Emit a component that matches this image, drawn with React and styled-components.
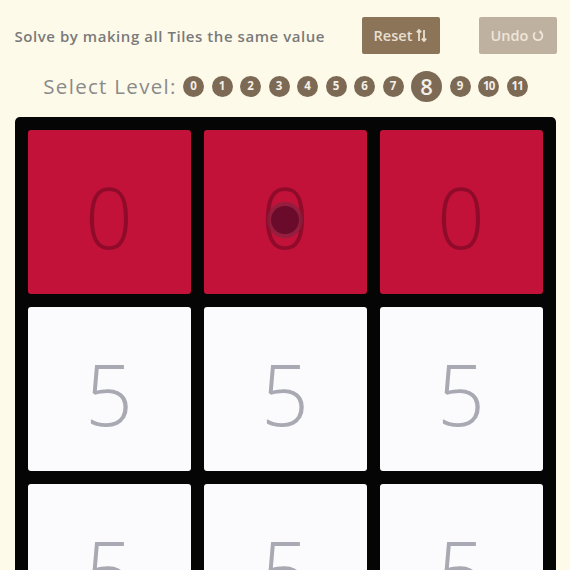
import React from "react";
import styled, { createGlobalStyle } from "styled-components";

const Global = createGlobalStyle`
  html, body { margin: 0; padding: 0; background: #fdfaea; }
  body { font-family: "Open Sans", "Noto Sans", sans-serif; }
`;

const Page = styled.div`
  width: 542px;
  margin: 0 auto;
  padding-top: 17px;
  padding-left: 1px;
`;

const Header = styled.div`
  display: flex;
  align-items: center;
  height: 37px;
`;

const Title = styled.div`
  flex: 1;
  font-size: 15px;
  font-weight: 600;
  color: #7a7a7a;
  letter-spacing: 0.55px;
`;

const Button = styled.button`
  height: 37px;
  width: 78px;
  border: none;
  border-radius: 2px;
  padding: 0;
  display: flex;
  align-items: center;
  justify-content: center;
  gap: 4px;
  font-family: "Open Sans", sans-serif;
  font-size: 14.5px;
  font-weight: 600;
  color: ${(p) => (p.$disabled ? "#eee6da" : "#e9dfcf")};
  background: ${(p) => (p.$disabled ? "#bfb19f" : "#8b7457")};
  margin-left: ${(p) => p.$gap || 0}px;
`;

const LevelRow = styled.div`
  display: flex;
  align-items: center;
  justify-content: center;
  gap: 7.5px;
  height: 32px;
  margin-top: 16px;
  margin-bottom: 15px;
`;

const LevelLabel = styled.span`
  font-size: 20.5px;
  color: #8a8a8a;
  letter-spacing: 1.3px;
  margin-right: -1px;
`;

const LevelDot = styled.span`
  width: ${(p) => (p.$active ? 31 : 21)}px;
  height: ${(p) => (p.$active ? 31 : 21)}px;
  border-radius: 50%;
  background: #7d6a55;
  color: #f4efe8;
  font-size: ${(p) => (p.$active ? 22 : 11.5)}px;
  font-weight: ${(p) => (p.$active ? 600 : 700)};
  display: flex;
  align-items: center;
  justify-content: center;
  letter-spacing: ${(p) => (p.$small ? "-0.8px" : "0")};
  line-height: 1;
`;

const Board = styled.div`
  background: #050505;
  border-radius: 5px;
  padding: 13px;
  display: grid;
  grid-template-columns: repeat(3, 163px);
  grid-auto-rows: 164px;
  gap: 13px;
  width: 515px;
`;

const Tile = styled.div`
  position: relative;
  border-radius: 3px;
  background: ${(p) => (p.$red ? "#c2123a" : "#fbfbfd")};
  color: ${(p) => (p.$red ? "rgba(70,0,20,0.4)" : "#a9a9b3")};
  display: flex;
  align-items: center;
  justify-content: center;
  font-size: 84px;
  font-weight: 340;
  line-height: 1;
  padding-top: 10px;
  box-sizing: border-box;
`;

const Marker = styled.span`
  position: absolute;
  left: 50%;
  top: calc(50% + 8px);
  width: 28px;
  height: 28px;
  border-radius: 50%;
  transform: translate(-50%, -50%);
  background: #6a0b2b;
  box-shadow: 0 0 0 4px rgba(130, 35, 65, 0.7);
`;

const SortIcon = () => (
  <svg width="11" height="13" viewBox="0 0 11 13" fill="none" stroke="currentColor" strokeWidth="1.8">
    <path d="M3 12V1M0.8 3.4L3 1l2.2 2.4" />
    <path d="M8 1v11M5.8 9.6L8 12l2.2-2.4" />
  </svg>
);

const UndoIcon = () => (
  <svg width="12" height="12" viewBox="0 0 12 12" fill="none" stroke="currentColor" strokeWidth="1.8">
    <path d="M8.2 2A4.4 4.4 0 1 1 3.2 2.4" />
    <path d="M8.6 0.6L8.2 2.3 10 2.8" />
  </svg>
);

const levels = [0, 1, 2, 3, 4, 5, 6, 7, 8, 9, 10, 11];
const tiles = [0, 0, 0, 5, 5, 5, 5, 5, 5];

export default function App() {
  return (
    <>
      <Global />
      <Page>
        <Header>
          <Title>Solve by making all Tiles the same value</Title>
          <Button>
            Reset <SortIcon />
          </Button>
          <Button $disabled $gap={39}>
            Undo <UndoIcon />
          </Button>
        </Header>
        <LevelRow>
          <LevelLabel>Select Level:</LevelLabel>
          {levels.map((l) => (
            <LevelDot key={l} $active={l === 8} $small={l >= 10}>
              {l}
            </LevelDot>
          ))}
        </LevelRow>
        <Board>
          {tiles.map((v, i) => (
            <Tile key={i} $red={v === 0}>
              {v}
              {i === 1 && <Marker />}
            </Tile>
          ))}
        </Board>
      </Page>
    </>
  );
}
